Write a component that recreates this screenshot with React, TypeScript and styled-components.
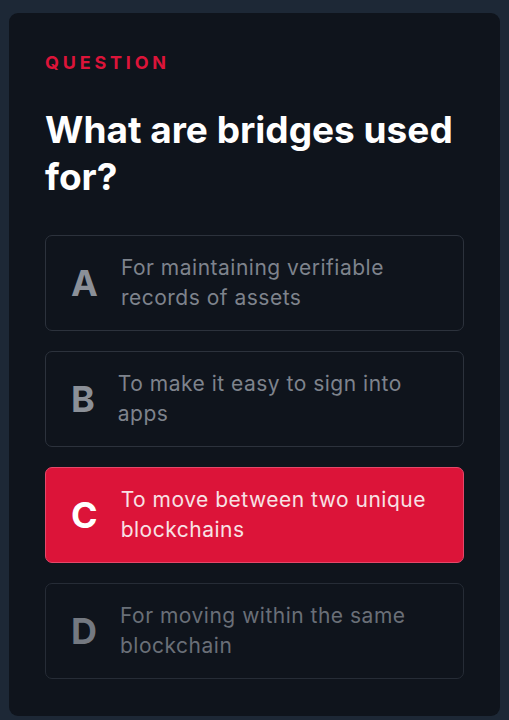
import React from 'react';
import styled, { createGlobalStyle } from 'styled-components';

interface Answer {
    letter: string;
    text: string;
}

const answers: Answer[] = [
    { letter: 'A', text: 'For maintaining verifiable records of assets' },
    { letter: 'B', text: 'To make it easy to sign into apps' },
    { letter: 'C', text: 'To move between two unique blockchains' },
    { letter: 'D', text: 'For moving within the same blockchain' },
];

const selectedLetter = 'C';

const GlobalStyle = createGlobalStyle`
    html, body {
        margin: 0;
        padding: 0;
        background: #1d2836;
        font-family: Inter, "Noto Sans", sans-serif;
        -webkit-font-smoothing: antialiased;
    }
`;

const Page = styled.div`
    padding: 13px 9px 6px;
    min-height: 720px;
    box-sizing: border-box;
`;

const Card = styled.section`
    background: #0f141c;
    border-radius: 9px;
    padding: 38px 36px 37px;
    display: flex;
    flex-direction: column;
`;

const Label = styled.div`
    color: #dc1439;
    font-size: 18px;
    font-weight: 700;
    letter-spacing: 0.21em;
    line-height: 24px;
`;

const Title = styled.h1`
    margin: 31px 0 35px;
    color: #ffffff;
    font-size: 37px;
    font-weight: 700;
    line-height: 47px;
`;

const Options = styled.div`
    display: flex;
    flex-direction: column;
    gap: 20px;
`;

const Option = styled.div<{ $selected: boolean; $dim?: boolean }>`
    display: flex;
    align-items: center;
    gap: 23px;
    padding: 17px 30px 17px 25px;
    min-height: 60px;
    border-radius: 7px;
    border: 1px solid ${(p) => (p.$selected ? '#e4486a' : '#2c323c')};
    background: ${(p) => (p.$selected ? '#dc1439' : 'transparent')};
    opacity: ${(p) => (p.$dim ? 0.82 : 1)};
`;

const Letter = styled.span<{ $selected: boolean }>`
    font-size: 36px;
    font-weight: 700;
    line-height: 1;
    color: ${(p) => (p.$selected ? '#ffffff' : '#8b9098')};
`;

const AnswerText = styled.span<{ $selected: boolean }>`
    font-size: 21px;
    line-height: 30px;
    letter-spacing: 0.5px;
    color: ${(p) => (p.$selected ? '#f8e1e5' : '#7e838c')};
`;

export default function App(): JSX.Element {
    return (
        <Page>
            <GlobalStyle />
            <Card>
                <Label>QUESTION</Label>
                <Title>What are bridges used for?</Title>
                <Options>
                    {answers.map((a) => {
                        const selected = a.letter === selectedLetter;
                        return (
                            <Option key={a.letter} $selected={selected} $dim={a.letter === 'D'}>
                                <Letter $selected={selected}>{a.letter}</Letter>
                                <AnswerText $selected={selected}>{a.text}</AnswerText>
                            </Option>
                        );
                    })}
                </Options>
            </Card>
        </Page>
    );
}
